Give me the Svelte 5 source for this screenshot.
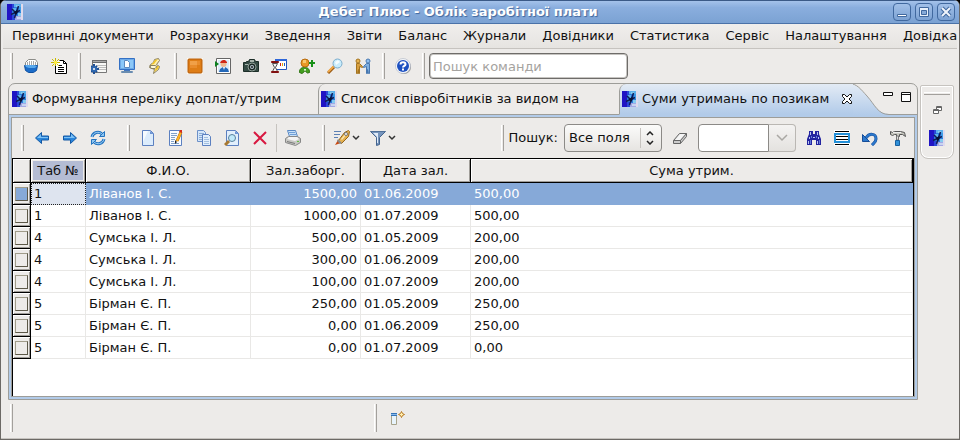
<script lang="ts">
	interface Row {
		tab: string;
		name: string;
		debt: string;
		date: string;
		sum: string;
	}

	interface Tool {
		icon: string;
		label: string;
	}

	const menu = [
		'Первинні документи',
		'Розрахунки',
		'Зведення',
		'Звіти',
		'Баланс',
		'Журнали',
		'Довідники',
		'Статистика',
		'Сервіс',
		'Налаштування',
		'Довідка'
	];

	const mainTools: Tool[][] = [
		[
			{ icon: 'bucket', label: 'База даних' },
			{ icon: 'newdoc', label: 'Новий документ' }
		],
		[
			{ icon: 'process', label: 'Операції' },
			{ icon: 'monitor', label: 'Робоче місце' },
			{ icon: 'scroll', label: 'Сценарій' }
		],
		[
			{ icon: 'box', label: 'Модуль' },
			{ icon: 'portrait', label: 'Картка співробітника' },
			{ icon: 'camera', label: 'Знімок' },
			{ icon: 'timer', label: 'Табель' },
			{ icon: 'adduser', label: 'Додати співробітника' },
			{ icon: 'magnifier', label: 'Знайти' },
			{ icon: 'people', label: 'Контрагенти' }
		],
		[{ icon: 'help', label: 'Допомога' }]
	];

	const navTools: Tool[] = [
		{ icon: 'back', label: 'Назад' },
		{ icon: 'forward', label: 'Вперед' },
		{ icon: 'refresh', label: 'Оновити' }
	];

	const editTools: Tool[] = [
		{ icon: 'page', label: 'Створити' },
		{ icon: 'edit', label: 'Змінити' },
		{ icon: 'copy', label: 'Копіювати' },
		{ icon: 'view', label: 'Переглянути' },
		{ icon: 'delete', label: 'Видалити' }
	];

	const searchTools: Tool[] = [
		{ icon: 'binoculars', label: 'Шукати' },
		{ icon: 'rows', label: 'Виділити рядки' },
		{ icon: 'undo', label: 'Скасувати' },
		{ icon: 'hammer', label: 'Налаштувати' }
	];

	const rows: Row[] = [
		{ tab: '1', name: 'Ліванов І. С.', debt: '1500,00', date: '01.06.2009', sum: '500,00' },
		{ tab: '1', name: 'Ліванов І. С.', debt: '1000,00', date: '01.07.2009', sum: '500,00' },
		{ tab: '4', name: 'Сумська І. Л.', debt: '500,00', date: '01.05.2009', sum: '200,00' },
		{ tab: '4', name: 'Сумська І. Л.', debt: '300,00', date: '01.06.2009', sum: '200,00' },
		{ tab: '4', name: 'Сумська І. Л.', debt: '100,00', date: '01.07.2009', sum: '200,00' },
		{ tab: '5', name: 'Бірман Є. П.', debt: '250,00', date: '01.05.2009', sum: '250,00' },
		{ tab: '5', name: 'Бірман Є. П.', debt: '0,00', date: '01.06.2009', sum: '250,00' },
		{ tab: '5', name: 'Бірман Є. П.', debt: '0,00', date: '01.07.2009', sum: '0,00' }
	];

	let selected = $state(0);
	let command = $state('');
	let query = $state('');
</script>

{#snippet icon(name: string)}
	<svg class="icon" viewBox="0 0 16 16" width="16" height="16" aria-hidden="true">
		{#if name === 'app'}
			<path fill="#2c7cdc" d="M0 0h16v16H0z" />
			<path fill="#2014c4" d="M0 0h5v16H0z" />
			<path fill="#2a48d8" d="M5 0h2v4H5zM5 11h3v5H5z" />
			<path fill="#5cb0ec" d="M7 0h8v3H7zM6 4h3v3H6z" />
			<path fill="#84ccf0" d="M9 1h3v2H9zM11 9h4v3h-4z" />
			<path fill="#a4a8e4" d="M8 12h6v4H8z" />
			<path fill="#c8d4f0" d="M10 13h4v2h-4z" />
			<path fill="#dfdaec" d="M14 0h2v16h-2z" />
			<path fill="#3c9ce8" d="M12 3h2v5h-2z" />
			<path fill="none" stroke="#101c58" stroke-width="1.500" d="M11.500 2L7.500 14M4 10.500l9-4M5 5l4 4" />
			<path fill="#081030" d="M7 8l3-2 1 2-2 3z" />
		{:else if name === 'bucket'}
			<path fill="#fff" stroke="#8c8c88" d="M2.500 7.500V4.500l3-3h7l2 3v3z" />
			<path stroke="#aaa" d="M4.500 4v4M6.500 3v5M8.500 3v4M10.500 3v4M12.500 4v3" />
			<path fill="#1c6cc8" stroke="#1050a0" d="M1.500 7.500h13l-1 5-3 2h-5l-3-2z" />
			<path fill="#58a8ec" d="M2 7h9l3 1-2 2H6L3 9z" />
		{:else if name === 'newdoc'}
			<path fill="#fff" stroke="#000" d="M4.500 4.500v11h11V5.500l-3-3H8.500" />
			<path stroke="#000" fill="none" d="M12.500 2.500v3h3M7 7.500h4M7 9.500h6M7 11.500h6M7 13.500h6" />
			<path stroke="#c8b800" d="M4.500 0v3M4.500 5v3M0 4.500h3M6 4.500h3M1 1l2 2M6 6l2 2M1 8l2-2M6 3l2-2" />
			<path fill="#ffee40" d="M3 3h3v3H3z" />
		{:else if name === 'process'}
			<path fill="#f8f8f6" stroke="#777" d="M1.500 2.500h14v12h-14z" />
			<path fill="#6c6c6c" d="M1 2h15v3H1z" />
			<path fill="#aaa" d="M2 3h13v1H2z" />
			<path stroke="#bbb" d="M5 7.500h10M7 9.500h8M7 11.500h8" />
			<path stroke="#1f4f94" stroke-width="2" d="M3 6v10M0 11h8M0 8l6 6M0 14l6-6" />
			<circle cx="3" cy="11" r="3" fill="#2f68b0" />
			<circle cx="3" cy="11" r="1" fill="#fff" />
		{:else if name === 'monitor'}
			<path fill="#6eaae8" stroke="#3470c4" d="M.5 .5h15v11H.5z" />
			<path fill="#8cc8f8" d="M2 2h12v8H2z" />
			<path fill="#fff" stroke="#5c8ac0" d="M5.500 2.500h3l2 2v5h-5z" />
			<path fill="#4478c0" d="M5 12h6v1H5z" />
			<path fill="#dce8f4" stroke="#6a8cb0" d="M2.500 13.500h11v1h-11z" />
		{:else if name === 'scroll'}
			<path fill="#fff0b0" stroke="#8a8060" d="M7.500 1.500l4-1 1 2-3 4 3 2-1 3-5 4 1-4-5-2 1-3 3-2z" />
			<path fill="#f2c62c" d="M8 2l3-1-4 5-3 1zM9 8h3l-1 3-4 3 2-4z" />
			<path fill="#fff8d8" stroke="#8a8060" d="M3 7.500h5l2 1-2 2H4z" />
		{:else if name === 'box'}
			<rect x="0" y="0" width="16" height="16" fill="#fffaf0" />
			<rect x="1" y="1" width="14" height="14" rx="1" fill="#de7d16" stroke="#b35a08" />
			<path fill="#f0a048" d="M3 3h7v4H3z" />
			<path fill="#e88c2c" d="M3 7h7v3H3zM10 3h3v4h-3z" />
		{:else if name === 'portrait'}
			<path fill="#fff" stroke="#666" d="M1.500 .5h14v15h-14z" />
			<path fill="#dcebf8" d="M3 2h11v12H3z" />
			<circle cx="8.500" cy="6" r="3" fill="#f0b890" />
			<path fill="#d02818" d="M5 5l1-2 2-1h2l2 2v1z" />
			<path fill="#2468b8" d="M4 14l1-3 3-2h2l3 2 1 3z" />
			<path fill="#fff" d="M8 9h2l-1 3z" />
			<path fill="#0c8020" d="M0 3l4 3-4 3z" />
		{:else if name === 'camera'}
			<path fill="#354b44" stroke="#1d2e28" d="M.5 4.500h3v-1h2l1-2h5l1 2h3v10H.5z" />
			<path fill="#a8b4ac" d="M7 2h4v2H7zM2 6h3v1H2z" />
			<circle cx="9" cy="9" r="4" fill="#1c2a26" stroke="#90a098" />
			<circle cx="9" cy="9" r="2" fill="#b8c8d0" />
			<circle cx="9" cy="9" r="1" fill="#222" />
		{:else if name === 'timer'}
			<path fill="#fff" stroke="#2454bc" d="M4.500 1.500h11v10h-11z" />
			<path fill="#2e66d8" d="M4 1h12v2H4z" />
			<path fill="#cc2020" d="M9 5h1v3H9z" />
			<path fill="#e8a000" d="M11 5h1v3h-1z" />
			<path fill="#2060c0" d="M13 5h1v3h-1z" />
			<path fill="#f4f4f4" stroke="#555" d="M1.500 5.500h5l-2 4 2 4h-5l2-4z" />
			<path fill="#d42c20" stroke="#801010" d="M.5 3.500h7v1h-7zM.5 13.500h7v1h-7z" />
		{:else if name === 'adduser'}
			<path fill="#44a020" stroke="#28700c" d="M.5 14.500c0-4 2-5 5-5s5 1 5 5l-2 .5L6 13l-3 2.500z" />
			<circle cx="6" cy="5" r="4" fill="#e89828" stroke="#b86c10" />
			<path fill="#f8c870" d="M4 2h3v3H4z" />
			<path fill="#fff" d="M5 11h2l-1 3z" />
			<path stroke="#189018" stroke-width="2" d="M13 2v7M10 5h6" />
		{:else if name === 'magnifier'}
			<path stroke="#9c5c14" stroke-width="3" d="M1 15l6-6" />
			<path stroke="#f0a848" stroke-width="2" d="M1 14l6-6" />
			<circle cx="10.500" cy="5.500" r="4.500" fill="#c8ecfc" stroke="#7caccc" />
			<path fill="#f4fcff" d="M8 4l3-2 2 2-4 3z" />
		{:else if name === 'people'}
			<path fill="#d8a040" stroke="#a47420" d="M1.500 5.500h3l3 3v1l-3-1v7h-1v-4l-1 4h-1z" />
			<circle cx="3" cy="3" r="2" fill="#e8b450" stroke="#a47420" />
			<path fill="#80b0e0" stroke="#4878b0" d="M14.500 5.500h-3l-3 3v1l3-1v7h1v-4l1 4h1z" />
			<circle cx="13" cy="3" r="2" fill="#90c0f0" stroke="#4878b0" />
		{:else if name === 'help'}
			<circle cx="9" cy="9" r="7" fill="#999" />
			<circle cx="8" cy="8" r="7.500" fill="#f4f6fa" stroke="#a0a8b8" stroke-width=".5" />
			<circle cx="8" cy="8" r="6" fill="#1d50c0" />
			<path fill="none" stroke="#fff" stroke-width="2" d="M5.500 6.500c0-3 5-3 5 0 0 1.500-2.500 1-2.500 3M8 10.500v2" />
		{:else if name === 'back' || name === 'forward'}
			<g transform={name === 'forward' ? 'translate(16 0) scale(-1 1)' : undefined}>
				<path fill="#2a86dc" stroke="#1459a4" d="M1.500 8l6-5.500v3.500h7v4h-7v3.500z" />
				<path fill="#7cc0f4" d="M3 8l4-4v3h7v1z" />
			</g>
		{:else if name === 'refresh'}
			<path fill="none" stroke="#2474c0" stroke-width="3" d="M2 7c1-5 7-6 10-3M14 9c-1 5-7 6-10 3" />
			<path fill="none" stroke="#a4d4f8" d="M2 7c1-5 7-6 10-3M14 9c-1 5-7 6-10 3" />
			<path fill="#8cc4f0" stroke="#2474c0" d="M14.500 1.500v5h-5zM1.500 14.500v-5h5z" />
		{:else if name === 'page'}
			<path fill="#dcecfc" stroke="#5c80c0" d="M2.500 .5h8l3 3v12h-11z" />
			<path fill="#f6fbff" d="M3 1h5L3 12z" />
			<path fill="#6c94d4" d="M10 1l4 3h-4z" />
		{:else if name === 'edit'}
			<path fill="#f8fbff" stroke="#5c80c0" d="M1.500 .5h12v15h-12z" />
			<path stroke="#80a0c8" d="M3 3.500h6M3 5.500h6M3 7.500h4M3 9.500h4M3 11.500h3M3 13.500h8" />
			<path stroke="#b06008" stroke-width="3" d="M13 2L9 11" />
			<path stroke="#ffb420" stroke-width="2" d="M13 2L9 11" />
			<path fill="#d42c1c" d="M12 0h2v3l-3-1z" />
			<path fill="#222" d="M7 10l2 2-2 2z" />
		{:else if name === 'copy'}
			<path fill="#d4e6fa" stroke="#6c90c8" d="M1.500 .5h6l2 2v9h-8z" />
			<path stroke="#8cacd4" d="M3 3.500h5M3 5.500h3M3 7.500h3M3 9.500h3" />
			<path fill="#e2effc" stroke="#5c80c0" d="M6.500 4.500h6l2 2v9h-8z" />
			<path stroke="#a4c0e0" d="M8 7.500h4M8 9.500h5M8 11.500h5M8 13.500h5" />
		{:else if name === 'view'}
			<path fill="#e2effc" stroke="#5c80c0" d="M2.500 .5h9l3 3v12h-12z" />
			<path fill="#6c94d4" d="M11 1l4 3h-4z" />
			<path stroke="#a87830" stroke-width="3" d="M1 15l4-4" />
			<circle cx="8" cy="8" r="3.500" fill="#c0eafa" stroke="#58809c" />
		{:else if name === 'delete'}
			<path stroke="#d81840" stroke-width="2" d="M2 2l12 12M14 2L2 14" />
		{:else if name === 'print'}
			<path fill="#c8e0f8" stroke="#5888c4" d="M2.500 .5h8l2 6h-8z" />
			<path stroke="#70a0d8" d="M4 2.500h6M5 4.500h6" />
			<path fill="#c8c8c4" stroke="#888" d="M.5 8.500l3-2h9l3 2v4l-5 3-10-3z" />
			<path fill="#f4f4f4" d="M2 9l2-2h8l2 2-4 2z" />
			<path fill="#777" d="M2 11l8 2v1l-8-2z" />
			<path fill="#60c040" d="M12 11h2v1h-2z" />
		{:else if name === 'rocket'}
			<path stroke="#5c80b4" d="M0 1.500h7M0 4.500h6M0 7.500h4" />
			<path fill="#e4b050" stroke="#946418" d="M4.500 10.500l6-8 4-2 1 1-1 5-7 7z" />
			<path fill="#fae8b0" d="M7 9l5-6 1 1-5 6z" />
			<circle cx="12" cy="4" r="1.500" fill="#fff" stroke="#777" />
			<path fill="#c84810" d="M1 15l3-5 3 3z" />
			<path fill="#888" d="M4 9l4 4-2 1-3-3z" />
		{:else if name === 'funnel'}
			<path fill="#7694bc" stroke="#44648e" d="M.5 1.500h15l-6 6v7l-3 1v-8z" />
			<path fill="#e0ebf8" d="M3 3h5v10H7V7z" />
			<path fill="#507098" d="M1 1h14v1H1z" />
		{:else if name === 'eraser'}
			<path fill="#ccc" stroke="#666" d="M1.500 10.500l6-7h7v3l-6 7h-7z" />
			<path fill="#f5f5f5" d="M3 10l5-6h5l-5 6z" />
			<path fill="none" stroke="#666" d="M1.500 10.500h7l6-7M8.500 10.500v3" />
		{:else if name === 'binoculars'}
			<path fill="#2424a0" d="M3 1h4v3h2V1h4v3l2 5v6h-5v-5H6v5H1V9l2-5z" />
			<path fill="#b8c4f0" d="M4 2h1v3H4zM11 2h1v3h-1zM3 7h1v2H3zM7 7h2v1H7zM12 7h1v2h-1zM2 11h1v3H2zM11 11h1v3h-1z" />
			<path fill="#6078d8" d="M4 10h1v4H4zM13 10h1v4h-1zM5 6h1v2H5zM10 6h1v2h-1z" />
		{:else if name === 'rows'}
			<path fill="#fff" d="M0 0h16v16H0z" />
			<path stroke="#000" d="M1 1.500h14M1 14.500h14" />
			<path fill="#fff" stroke="#2490d8" stroke-width="2" d="M1 4h14v8H1z" />
			<path stroke="#000" d="M2 6.500h12M2 9.500h12" />
		{:else if name === 'undo'}
			<path fill="none" stroke="#174d98" stroke-width="3" d="M4 8c3-5 10-5 10 1 0 3-2 4-4 6" />
			<path fill="none" stroke="#2c78cc" stroke-width="2" d="M4 8c3-5 10-5 10 1 0 3-2 4-4 6" />
			<path fill="#2c78cc" stroke="#174d98" d="M.5 4.500v7h7z" />
		{:else if name === 'hammer'}
			<path fill="#c8c8c0" stroke="#555" d="M.5 1.500l2 1 2-1h6l4 1 1 4-3-2h-3v2h-3v-2h-2l-2 1-2-1z" />
			<path fill="#eee" d="M3 2h8v1H3z" />
			<path fill="#ddd" stroke="#777" d="M6.500 6h2v4h-2z" />
			<path fill="#3090d8" stroke="#1860a0" d="M5.500 10.500h4v5h-4z" />
		{:else if name === 'fastview'}
			<path fill="#e8f4fc" stroke="#a8a48c" d="M1.500 2.500h5v11h-5z" />
			<path fill="#3474b8" d="M1 2h6v3H1z" />
			<path fill="#88b8e8" d="M1 3h6v1H1z" />
			<path fill="#fff0b0" stroke="#b87820" d="M11.500 .5l1 2 2 1-2 1-1 2-1-2-2-1 2-1z" />
		{:else if name === 'restore'}
			<path fill="#fff" stroke="#666" d="M7.500 4.500h5v4h-5z" />
			<path fill="#fff" stroke="#666" d="M4.500 7.500h5v4h-5z" />
			<path stroke="#666" d="M7 5.500h6M4 8.500h6" />
		{/if}
	</svg>
{/snippet}

{#snippet tool(item: Tool)}
	<button class="tool" type="button" aria-label={item.label}>
		{@render icon(item.icon)}
	</button>
{/snippet}

{#snippet chevron()}
	<svg class="chevron" viewBox="0 0 8 6" width="8" height="6" aria-hidden="true">
		<path d="M1 1l3 3 3-3" fill="none" stroke="currentColor" stroke-width="1.500" />
	</svg>
{/snippet}

<div class="window">
	<header class="titlebar">
		{@render icon('app')}
		<h1>Дебет Плюс - Облік заробітної плати</h1>
		<div class="window-buttons">
			<button type="button" aria-label="Згорнути">
				<svg viewBox="0 0 16 16" width="16" height="16"><path d="M3.500 10.500h9v2h-9z" fill="#fff" stroke="#41699f" /></svg>
			</button>
			<button type="button" aria-label="Розгорнути">
				<svg viewBox="0 0 16 16" width="16" height="16">
					<path d="M3.500 3.500h9v9h-9z" fill="#e8f0fa" stroke="#41699f" />
					<path d="M5.500 6.500h5v4h-5z" fill="#86aad8" stroke="#41699f" />
				</svg>
			</button>
			<button type="button" aria-label="Закрити">
				<svg viewBox="0 0 16 16" width="16" height="16">
					<path d="M4 4l8 8M12 4l-8 8" stroke="#41699f" stroke-width="4" />
					<path d="M4 4l8 8M12 4l-8 8" stroke="#f0f5fc" stroke-width="2" />
				</svg>
			</button>
		</div>
	</header>

	<nav class="menu">
		{#each menu as item}
			<button type="button">{item}</button>
		{/each}
	</nav>

	<div class="toolbar">
		{#each mainTools as group}
			<div class="group">
				{#each group as item}
					{@render tool(item)}
				{/each}
			</div>
		{/each}
		<div class="group">
			<input class="command" type="text" placeholder="Пошук команди" aria-label="Пошук команди" bind:value={command} />
		</div>
	</div>

	<main class="workbench">
		<section class="folder">
			<div class="tabs">
				<button class="tab" type="button">
					{@render icon('app')}
					<span>Формування переліку доплат/утрим</span>
				</button>
				<button class="tab second" type="button">
					{@render icon('app')}
					<span>Список співробітників за видом на</span>
				</button>
				<div class="tab active">
					{@render icon('app')}
					<span>Суми утримань по позикам</span>
					<button class="plain" type="button" aria-label="Закрити вкладку">
						<svg viewBox="0 0 12 12" width="12" height="12">
							<path
								d="M1.500 1.500h2l2.500 2.500 2.500-2.500h2v2l-2.500 2.500 2.500 2.500v2h-2l-2.500-2.500-2.500 2.500h-2v-2l2.500-2.500-2.500-2.500z"
								fill="#fff"
								stroke="#111"
							/>
						</svg>
					</button>
				</div>
				<svg class="curve" viewBox="0 0 48 31" width="48" height="31" aria-hidden="true">
					<defs>
						<linearGradient id="tabfill" x1="0" y1="0" x2="0" y2="1">
							<stop offset="0" stop-color="#e3ebf5" />
							<stop offset="1" stop-color="#b2cbe9" />
						</linearGradient>
					</defs>
					<path d="M0 0h4c8 0 12 6 18 12 8 9 11 18 22 18h4v1H0z" fill="url(#tabfill)" />
					<path d="M0 -.5h4c8 0 12 6 18 12.500 8 9 11 18.500 22 18.500h4" fill="none" stroke="#9d9d99" />
				</svg>
				<div class="folder-buttons">
					<button class="plain" type="button" aria-label="Мінімізувати">
						<svg viewBox="0 0 10 10" width="10" height="10"><path d="M.5 .5h9v3h-9z" fill="#fff" stroke="#111" /></svg>
					</button>
					<button class="plain" type="button" aria-label="Максимізувати">
						<svg viewBox="0 0 10 10" width="10" height="10">
							<path d="M.5 .5h9v9h-9z" fill="#fff" stroke="#111" />
							<path d="M0 2.500h10" stroke="#111" />
						</svg>
					</button>
				</div>
			</div>

			<div class="pane">
				<div class="toolbar inner">
					<div class="group">
						{#each navTools as item}
							{@render tool(item)}
						{/each}
					</div>
					<div class="group">
						{#each editTools as item}
							{@render tool(item)}
						{/each}
						<span class="divider"></span>
						{@render tool({ icon: 'print', label: 'Друк' })}
					</div>
					<div class="group">
						<button class="tool wide" type="button" aria-label="Дії">
							{@render icon('rocket')}
							{@render chevron()}
						</button>
						<button class="tool wide" type="button" aria-label="Фільтр">
							{@render icon('funnel')}
							{@render chevron()}
						</button>
					</div>
					<div class="group search">
						<label for="field">Пошук:</label>
						<div class="select">
							<select id="field">
								<option>Все поля</option>
							</select>
							<svg viewBox="0 0 10 14" width="10" height="14" aria-hidden="true">
								<path d="M2 4l3-3 3 3M2 10l3 3 3-3" fill="none" stroke="#222" stroke-width="1.500" />
							</svg>
						</div>
						{@render tool({ icon: 'eraser', label: 'Очистити' })}
						<div class="combo">
							<input type="text" aria-label="Текст пошуку" bind:value={query} />
							<button type="button" aria-label="Історія пошуку">
								<svg viewBox="0 0 12 8" width="12" height="8">
									<path d="M1 1l5 5 5-5" fill="none" stroke="#aaa8a4" stroke-width="1.500" />
								</svg>
							</button>
						</div>
						{#each searchTools as item}
							{@render tool(item)}
						{/each}
					</div>
				</div>

				<div class="grid">
					<table>
						<colgroup>
							<col class="c-mark" />
							<col class="c-tab" />
							<col class="c-name" />
							<col class="c-num" />
							<col class="c-num" />
							<col />
						</colgroup>
						<thead>
							<tr>
								<th aria-label="Позначка"></th>
								<th class="sorted"><span>Таб №</span></th>
								<th>Ф.И.О.</th>
								<th>Зал.заборг.</th>
								<th>Дата зал.</th>
								<th>Сума утрим.</th>
							</tr>
						</thead>
						<tbody>
							{#each rows as row, i}
								<tr class:selected={selected === i}>
									<td class="mark">
										<button type="button" aria-label="Вибрати рядок {i + 1}" onclick={() => (selected = i)}></button>
									</td>
									<td class="key">{row.tab}</td>
									<td>{row.name}</td>
									<td class="right">{row.debt}</td>
									<td>{row.date}</td>
									<td>{row.sum}</td>
								</tr>
							{/each}
						</tbody>
					</table>
				</div>
			</div>
		</section>

		<aside class="trim">
			<button class="plain" type="button" aria-label="Відновити">{@render icon('restore')}</button>
			<button class="plain" type="button" aria-label="Дебет Плюс">{@render icon('app')}</button>
		</aside>
	</main>

	<footer class="status">
		<div class="group message"></div>
		<div class="group">
			<button class="tool" type="button" aria-label="Швидкий перегляд">{@render icon('fastview')}</button>
		</div>
	</footer>
</div>

<style>
	:global(body) {
		margin: 0;
		background: #000;
	}

	.window {
		box-sizing: border-box;
		display: flex;
		flex-direction: column;
		min-height: 100vh;
		border: 1px solid #6c6965;
		border-top: 0;
		border-radius: 6px 6px 0 0;
		overflow: hidden;
		background: #edebe9;
		color: #111;
		font: 13px/16px 'DejaVu Sans', sans-serif;
	}

	button,
	input,
	select {
		box-sizing: border-box;
		margin: 0;
		color: inherit;
		font: inherit;
	}

	button {
		padding: 0;
		border: 0;
		background: none;
	}

	svg {
		display: block;
		flex: none;
	}

	/* Title bar */
	.titlebar {
		display: flex;
		align-items: center;
		box-sizing: border-box;
		height: 24px;
		padding: 0 4px 0 6px;
		border-top: 1px solid #3b5a87;
		border-bottom: 1px solid #4a72a8;
		background: linear-gradient(#a4c2ea, #8aaede 30%, #7ba2d3);
	}

	h1 {
		flex: 1;
		margin: 0;
		color: #fff;
		font-size: 13px;
		text-align: center;
		text-shadow: 1px 1px 1px #3e659c;
	}

	.window-buttons {
		display: flex;
		gap: 4px;
	}

	.window-buttons button {
		border: 1px solid #41699f;
		border-radius: 4px;
		background: linear-gradient(#a2c0e8, #7ca2d3);
	}

	/* Menu */
	.menu {
		display: flex;
		flex: none;
		height: 24px;
		margin: 0 2px;
		padding-left: 1px;
		border-bottom: 1px solid #c6c3bf;
		overflow: hidden;
		background: linear-gradient(#f0eeec, #e6e4e1);
	}

	.menu button {
		flex: none;
		padding: 0 8px;
		white-space: nowrap;
	}

	/* Toolbars */
	.toolbar {
		display: flex;
		align-items: center;
		gap: 5px;
		height: 34px;
		padding-left: 9px;
	}

	.group {
		display: flex;
		align-items: center;
	}

	.group::before {
		content: '';
		box-sizing: border-box;
		width: 3px;
		height: 26px;
		margin-right: 4px;
		border-right: 1px solid #a3a09c;
		border-left: 1px solid #fff;
	}

	.tool {
		display: flex;
		align-items: center;
		justify-content: center;
		width: 28px;
		height: 26px;
	}

	.tool.wide {
		gap: 2px;
		width: 36px;
	}

	.chevron {
		color: #333;
	}

	.command {
		width: 199px;
		height: 26px;
		padding: 0 3px;
		border: 1px solid #6e6c69;
		border-radius: 4px;
		background: #fff;
		box-shadow: inset 0 0 0 1px #c6c4c1;
	}

	.command::placeholder {
		color: #a5a3a0;
		opacity: 1;
	}

	.inner {
		gap: 15px;
		height: 40px;
		padding: 0 2px 0 9px;
	}

	.divider {
		width: 1px;
		height: 28px;
		margin: 0 2px;
		background: #c6c3bf;
	}

	.search {
		margin-left: auto;
	}

	.search label {
		margin-right: 6px;
	}

	.select {
		position: relative;
	}

	.select select {
		appearance: none;
		width: 98px;
		height: 28px;
		padding: 0 4px;
		border: 1px solid #8c8a87;
		border-radius: 4px;
		background: linear-gradient(#fbfbfa, #e6e4e1);
	}

	.select svg {
		position: absolute;
		top: 7px;
		right: 7px;
		pointer-events: none;
	}

	.select::after {
		content: '';
		position: absolute;
		top: 4px;
		right: 21px;
		width: 1px;
		height: 20px;
		background: #c6c3bf;
		pointer-events: none;
	}

	.search .select {
		margin-right: 4px;
	}

	.combo {
		display: flex;
		margin: 0 4px;
	}

	.combo input {
		width: 71px;
		height: 28px;
		border: 1px solid #8c8a87;
		border-radius: 4px 0 0 4px;
		background: #fff;
	}

	.combo button {
		display: flex;
		align-items: center;
		justify-content: center;
		width: 27px;
		height: 28px;
		border: 1px solid #bab7b3;
		border-left: 0;
		border-radius: 0 4px 4px 0;
		background: linear-gradient(#f4f3f2, #e4e2df);
	}

	/* Tab folder */
	.workbench {
		display: flex;
		flex: 1;
		align-items: flex-start;
		gap: 2px;
		padding: 0 5px 0 7px;
	}

	.folder {
		box-sizing: border-box;
		display: flex;
		flex: 1;
		flex-direction: column;
		align-self: stretch;
		min-width: 0;
		border: 1px solid #9d9d99;
		border-radius: 7px 7px 0 0;
		overflow: hidden;
	}

	.tabs {
		display: flex;
		height: 31px;
		border-bottom: 2px solid #b2cbe9;
	}

	.tab {
		box-sizing: border-box;
		display: flex;
		flex: none;
		align-items: center;
		gap: 4px;
		width: 309px;
		padding-left: 3px;
		border-bottom: 1px solid #9d9d99;
		white-space: nowrap;
	}

	.tab.second {
		width: 301px;
		padding-left: 2px;
		border-left: 1px solid #9d9d99;
		border-top-left-radius: 7px;
	}

	.tab.active {
		position: relative;
		width: auto;
		padding-left: 2px;
		border-bottom-color: #b2cbe9;
		border-left: 1px solid #9d9d99;
		border-top-left-radius: 7px;
		background: linear-gradient(#e3ebf5, #b2cbe9);
	}

	.tab .plain {
		margin-left: 8px;
	}

	.curve {
		margin-left: -8px;
	}

	.folder-buttons {
		display: flex;
		flex: 1;
		align-items: flex-start;
		justify-content: flex-end;
		gap: 8px;
		min-width: 0;
		box-sizing: border-box;
		padding: 8px 6px 0 0;
		border-bottom: 1px solid #9d9d99;
	}

	.pane {
		display: flex;
		flex: 1;
		flex-direction: column;
		margin: 0;
		border: 2px solid #b2cbe9;
		border-top: 0;
		box-shadow: inset 0 0 0 1px #9d9d99;
		padding: 1px;
	}

	/* Table */
	.grid {
		flex: 1;
		border: solid #000;
		border-width: 1px 1px 0;
		background: #fff;
	}

	table {
		width: 100%;
		border-collapse: separate;
		border-spacing: 0;
		table-layout: fixed;
	}

	.c-mark {
		width: 18px;
	}

	.c-tab {
		width: 55px;
	}

	.c-name {
		width: 165px;
	}

	.c-num {
		width: 110px;
	}

	th,
	td {
		box-sizing: border-box;
		height: 22px;
		padding: 0 3px;
		white-space: nowrap;
	}

	th {
		height: 24px;
		border-right: 1px solid #000;
		border-bottom: 1px solid #000;
		background: #edebe9;
		box-shadow:
			inset 1px 1px #fff,
			inset -1px -1px #a09d98;
		font-weight: 400;
	}

	th.sorted {
		padding: 2px;
	}

	.sorted span {
		display: block;
		height: 19px;
		background: #b4bcd4;
		line-height: 19px;
	}

	td {
		border-right: 1px solid #e9e8e6;
		border-bottom: 1px solid #e9e8e6;
	}

	.right {
		padding-right: 3px;
		text-align: right;
	}

	.mark {
		padding: 0 2px;
		border-right: 1px solid #000;
		border-bottom: 1px solid #000;
		background: #edebe9;
		box-shadow:
			inset 1px 1px #fff,
			inset -1px -1px #a09d98;
	}

	.mark button {
		display: block;
		width: 13px;
		height: 14px;
		border: 1px solid #7c7866;
		border-color: #a09c8a #5c5848 #5c5848 #a09c8a;
	}

	.selected td:not(.mark) {
		border-color: #86a9d8;
		background: #86a9d8;
		color: #fff;
	}

	.selected .mark button {
		background: #86a9d8;
	}

	.selected td.key:not(.mark) {
		border: 1px dotted #222;
		padding-left: 2px;
		background: #dee4ef;
		color: #111;
	}

	/* Right trim */
	.trim {
		box-sizing: border-box;
		display: flex;
		flex-direction: column;
		align-items: center;
		gap: 12px;
		width: 34px;
		margin-top: 2px;
		padding-bottom: 12px;
		border: 1px solid #c6c3bf;
		border-radius: 2px 2px 8px 8px;
		box-shadow: inset 0 0 0 1px #fff;
	}

	.trim::before {
		content: '';
		width: 26px;
		height: 1px;
		margin: 6px 0 -5px;
		border-top: 1px solid #fff;
		border-bottom: 1px solid #a3a09c;
	}

	/* Status bar */
	.status {
		display: flex;
		align-items: center;
		height: 38px;
		padding-left: 9px;
		border-bottom: 1px solid #c6c3bf;
	}

	.message {
		box-sizing: border-box;
		width: 364px;
	}

	.status .group::before {
		height: 28px;
		margin-bottom: 2px;
	}

	.status .tool {
		width: 34px;
	}
</style>
